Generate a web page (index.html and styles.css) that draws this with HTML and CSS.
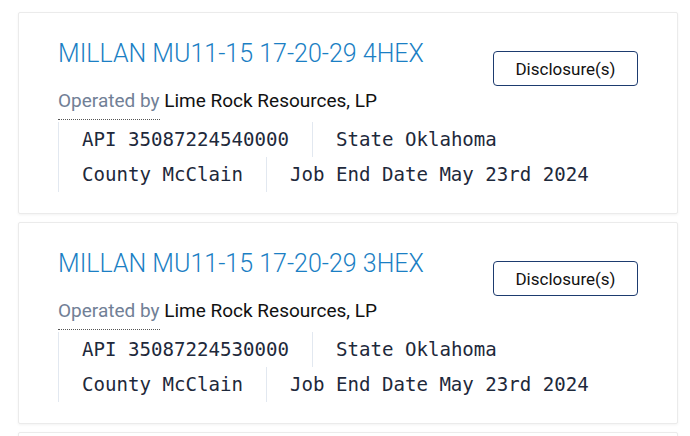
FILE: index.html
```html
<!DOCTYPE html>
<html lang="en">
<head>
  <meta charset="UTF-8">
  <meta name="viewport" content="width=device-width, initial-scale=1.0">
  <title>Wells</title>
  <link rel="stylesheet" href="styles.css">
</head>
<body>
  <div class="wells">
    <div class="well">
      <div class="well-head">
        <a class="well-name" href="#">MILLAN MU11-15 17-20-29 4HEX</a>
        <button class="disclosure-btn" type="button">Disclosure(s)</button>
      </div>
      <p class="operator"><abbr class="op-label" title="Operator">Operated by</abbr> Lime Rock Resources, LP</p>
      <ul class="facts">
        <li>API 35087224540000</li>
        <li>State Oklahoma</li>
        <li>County McClain</li>
        <li>Job End Date May 23rd 2024</li>
      </ul>
    </div>
    <div class="well">
      <div class="well-head">
        <a class="well-name" href="#">MILLAN MU11-15 17-20-29 3HEX</a>
        <button class="disclosure-btn" type="button">Disclosure(s)</button>
      </div>
      <p class="operator"><abbr class="op-label" title="Operator">Operated by</abbr> Lime Rock Resources, LP</p>
      <ul class="facts">
        <li>API 35087224530000</li>
        <li>State Oklahoma</li>
        <li>County McClain</li>
        <li>Job End Date May 23rd 2024</li>
      </ul>
    </div>
    <div class="well well-empty"></div>
  </div>
</body>
</html>
```

FILE: styles.css
```css
body {
  font-family: Roboto, 'Liberation Sans', sans-serif;
  background-color: #ffffff;
  color: #111;
  margin: 0;
  padding: 0;
}
.wells {
  padding: 12px 12px 0 18px;
  display: flex;
  flex-direction: column;
  gap: 8px;
}
.well {
  background-color: #fff;
  border: 1px solid #ebebeb;
  border-radius: 2px;
  box-shadow: 0 1px 3px rgba(0,0,0,0.05);
  padding: 26px 39px 21px 39px;
}
.well-empty {
  min-height: 40px;
}
.well-head {
  display: flex;
  justify-content: space-between;
  align-items: flex-start;
}
.well-name {
  font-size: 25px;
  font-weight: 300;
  line-height: 30px;
  color: #1b7fc4;
  text-decoration: none;
}
.disclosure-btn {
  margin-top: 12px;
  width: 145px;
  height: 35px;
  background: #fff;
  border: 1px solid #1d3b6f;
  border-radius: 4px;
  font-family: Roboto, 'Liberation Sans', sans-serif;
  font-size: 17px;
  color: #111;
  cursor: pointer;
}
.operator {
  margin: 3px 0 0;
  font-size: 19px;
  line-height: 24px;
}
.op-label {
  color: #718096;
  text-decoration: none;
  border-bottom: 1px dotted #555;
  padding-bottom: 7px;
}
.facts {
  list-style: none;
  margin: 9px 0 0;
  padding: 0;
  display: flex;
  flex-wrap: wrap;
  font-family: 'DejaVu Sans Mono', 'Liberation Mono', monospace;
  font-size: 19.1px;
  color: #1e293b;
}
.facts li {
  border-left: 1px solid #e2e8f0;
  padding: 0 23px;
  line-height: 35px;
}
```
